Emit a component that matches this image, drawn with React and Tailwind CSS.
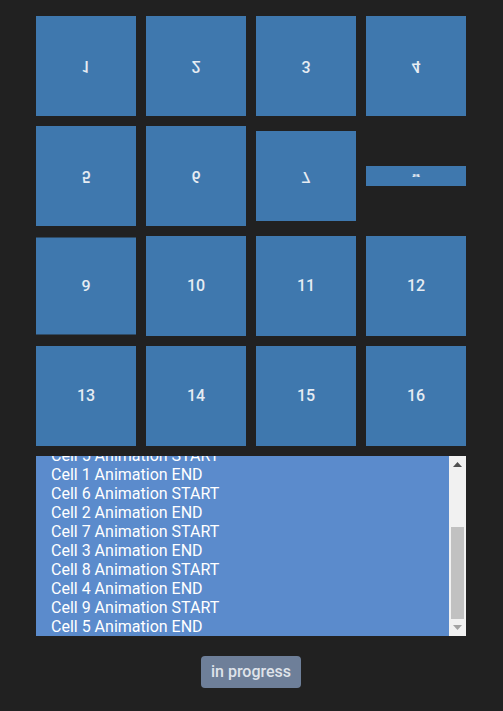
const cells = [
  { n: 1, flip: '-scale-y-100' },
  { n: 2, flip: '-scale-y-100' },
  { n: 3, flip: '-scale-y-100' },
  { n: 4, flip: '-scale-y-100' },
  { n: 5, flip: '-scale-y-100' },
  { n: 6, flip: '-scale-y-100' },
  { n: 7, flip: '-scale-y-90' },
  { n: 8, flip: 'scale-y-[0.2]' },
  { n: 9, flip: 'scale-y-[0.97]' },
  { n: 10, flip: '' },
  { n: 11, flip: '' },
  { n: 12, flip: '' },
  { n: 13, flip: '' },
  { n: 14, flip: '' },
  { n: 15, flip: '' },
  { n: 16, flip: '' },
]

const log = [
  'Cell 1 Animation START',
  'Cell 2 Animation START',
  'Cell 3 Animation START',
  'Cell 4 Animation START',
  'Cell 5 Animation START',
  'Cell 1 Animation END',
  'Cell 6 Animation START',
  'Cell 2 Animation END',
  'Cell 7 Animation START',
  'Cell 3 Animation END',
  'Cell 8 Animation START',
  'Cell 4 Animation END',
  'Cell 9 Animation START',
  'Cell 5 Animation END',
]

export default function App() {
  return (
    <div className="min-h-[711px] bg-[#212121] pt-4 font-['Roboto',sans-serif]">
      <div className="ml-9 w-[430px]">
        <div className="grid grid-cols-4 gap-[10px]">
          {cells.map(({ n, flip }) => (
            <div
              key={n}
              className={`flex h-[100px] items-center justify-center bg-[#3f78ae] text-base font-medium text-[#e6ecf3] ${flip}`}
            >
              {n}
            </div>
          ))}
        </div>

        <div className="mt-[10px] flex h-[180px] bg-[#5b8bcc]">
          {/* log, pinned to its last line */}
          <div className="flex flex-1 flex-col justify-end overflow-hidden pl-[15px] text-base leading-[19px] text-white">
            {log.map((line, i) => (
              <div key={i} className="whitespace-nowrap">{line}</div>
            ))}
          </div>
          {/* scrollbar */}
          <div className="flex w-[17px] flex-col items-center bg-[#f1f1f1]">
            <div className="flex h-[17px] w-full items-center justify-center">
              <svg width="9" height="5" viewBox="0 0 9 5">
                <path d="M4.5 0 L9 5 L0 5 Z" fill="#505050" />
              </svg>
            </div>
            <div className="flex-1 w-full px-[2px] pt-[54px]">
              <div className="h-[92px] w-full bg-[#c1c1c1]" />
            </div>
            <div className="flex h-[17px] w-full items-center justify-center">
              <svg width="9" height="5" viewBox="0 0 9 5">
                <path d="M0 0 L9 0 L4.5 5 Z" fill="#a3a3a3" />
              </svg>
            </div>
          </div>
        </div>

        <div className="flex justify-center pt-5">
          <button
            type="button"
            className="h-8 w-[100px] rounded bg-[#6e7f99] text-base font-medium text-[#dfe3ea]"
          >
            in progress
          </button>
        </div>
      </div>
    </div>
  )
}
